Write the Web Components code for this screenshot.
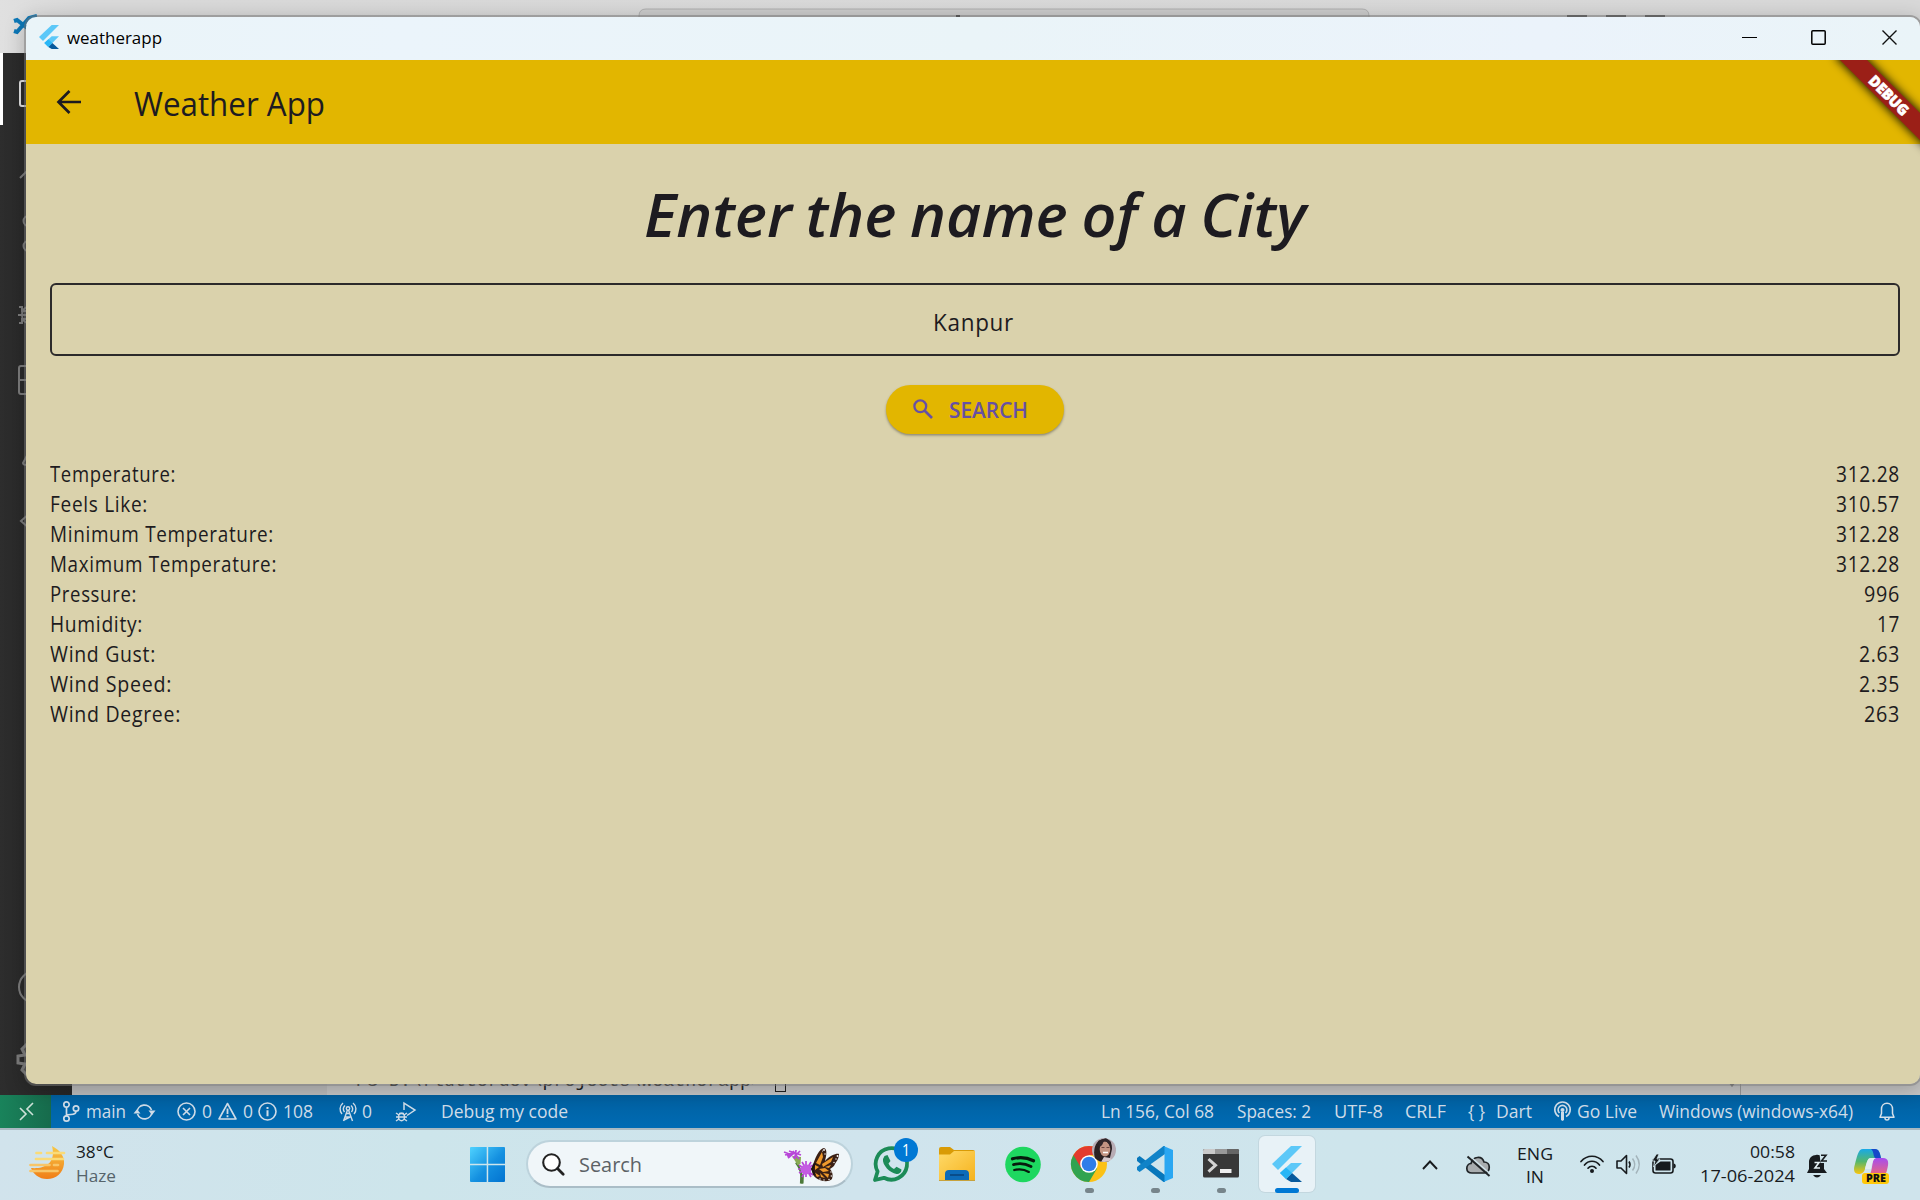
<!DOCTYPE html>
<html lang="en">
<head>
<meta charset="utf-8">
<title>weatherapp</title>
<style>
html,body{margin:0;height:100%;overflow:hidden}
body{font-family:"Open Sans","Noto Sans",sans-serif}
</style>
</head>
<body>
<desktop-screen></desktop-screen>
<script>
const ICONS = {
  flutter: `<path d="M19 0L0 18l6 6L30 0z" fill="#5cc8f8"/><path d="M19 17L8 27l6 6L30 17z" fill="#5cc8f8"/><path d="M14 33l5 3h11L20 27z" fill="#075a9d"/><path d="M8 27l6-5.500 6 5.500-6 6z" fill="#29b6f6"/>`,
  min: `<path d="M0 .5h15" stroke="#000" stroke-width="1"/>`,
  max: `<rect x=".8" y=".8" width="13.400" height="13.400" rx="1" fill="none" stroke="#000" stroke-width="1.500"/>`,
  close: `<path d="M.5.5l14 14M14.500.5l-14 14" stroke="#111" stroke-width="1.400"/>`,
  back: `<path d="M12.500 1L1.500 12l11 11M2 12h22" fill="none" stroke="#1d1b20" stroke-width="2.700"/>`,
  find: `<circle cx="7.300" cy="7.300" r="5.900" fill="none" stroke="#6750a4" stroke-width="2.300"/><path d="M11.500 11.500l7.500 7.500" stroke="#6750a4" stroke-width="2.700"/>`,
  remote: `<path d="M1 5l6 6-6 6M14 0L8 6l6 6" fill="none" stroke="#cfe3da" stroke-width="1.600"/>`,
  branch: `<g fill="none" stroke="#cfdce8" stroke-width="1.700"><circle cx="3.500" cy="3.500" r="2.700"/><circle cx="3.500" cy="17.500" r="2.700"/><circle cx="13" cy="7.500" r="2.700"/><path d="M3.500 6v9M13 10c0 3-2 3.500-5 3.500-3 0-4.500 0-4.500 2"/></g>`,
  sync: `<g fill="none" stroke="#cfdce8" stroke-width="1.700"><path d="M3 9a7.500 7.500 0 0 1 14.500-2M18 9a7.500 7.500 0 0 1-14.500 2"/></g><path d="M14.500 7.500h7L18 12zM-.500 10.500L3 6.200l3.500 4.300z" fill="#cfdce8"/>`,
  error: `<g fill="none" stroke="#cfdce8" stroke-width="1.600"><circle cx="9.500" cy="9.500" r="8.500"/><path d="M6 6l7 7M13 6l-7 7"/></g>`,
  warn: `<path d="M9.500 1.500L18 17H1z" fill="none" stroke="#cfdce8" stroke-width="1.600" stroke-linejoin="round"/><path d="M9.500 6.500v5.500M9.500 13.200v2" stroke="#cfdce8" stroke-width="1.800"/>`,
  info: `<circle cx="9.500" cy="9.500" r="8.500" fill="none" stroke="#cfdce8" stroke-width="1.600"/><path d="M9.500 5v2M9.500 8.300v6" stroke="#cfdce8" stroke-width="2"/>`,
  tower: `<g fill="none" stroke="#cfdce8" stroke-width="1.400"><path d="M4 1C.3 4 .3 9 3 12M14 1c3.700 3 3.700 8 1 11M6 3.500C4 5.500 4 8 5.500 10M12 3.500c2 2 2 4.500.5 6.500"/><circle cx="9" cy="6.500" r="1.700"/><path d="M8.500 8L4.500 19M9.500 8l4 11M6 15h6M7.500 11.500h3M5 18l6-3"/></g>`,
  debug: `<g fill="none" stroke="#cfdce8" stroke-width="1.500"><path d="M8 8V1l11 7-8 5.500"/><ellipse cx="5.500" cy="15" rx="3" ry="3.700"/><path d="M0 11l3 2M0 15h11M0 19l3-2M11 11l-3 2M11 19l-3-2M3 11.500h5"/></g>`,
  live: `<g fill="none" stroke="#cfdce8" stroke-width="1.600"><path d="M5 14.500a7.700 7.700 0 1 1 7 0M5.500 11a4.400 4.400 0 1 1 6 0"/></g><circle cx="8.500" cy="8" r="2" fill="#cfdce8"/><path d="M7 10h3v8l-1.500 1L7 18z" fill="#cfdce8"/>`,
  bell: `<path d="M8 1.200C4.500 1.200 2.500 4 2.500 7v4.500L1 15.300h14l-1.500-3.800V7c0-3-2-5.800-5.500-5.800zM6 16c0 2.700 4 2.700 4 0" fill="none" stroke="#d5e0ea" stroke-width="1.500" stroke-linejoin="round"/>`,
  haze: `<defs><linearGradient id="h" x2="0" y2="1"><stop stop-color="#f7c948"/><stop offset="1" stop-color="#f07d17"/></linearGradient></defs><path d="M23 0c8 4 13 11 12 18-1 9-8 15-17 15C10 33 4 28 2 22c10 1 26-2 21-22z" fill="url(#h)"/><g stroke-width="2.700" stroke-linecap="round"><path d="M7.500 7h4.500M18 7h17M7 13h27" stroke="#fadb78"/><path d="M1.500 19h19M25 19h4M1.500 25h27" stroke="#f8c568"/></g>`,
  start: `<defs><linearGradient id="s" x2="1" y2="1"><stop stop-color="#4fd2ff"/><stop offset=".55" stop-color="#1490e0"/><stop offset="1" stop-color="#0273d0"/></linearGradient></defs><path d="M1 0h15.700v16.700H0V1q0-1 1-1zM18.200 0H34q1 0 1 1v15.700H18.200zM0 18.200h16.700V35H1q-1 0-1-1zM18.200 18.200H35V34q0 1-1 1H18.200z" fill="url(#s)"/>`,
  search: `<circle cx="9.500" cy="9.500" r="8.300" fill="#fff" stroke="#222" stroke-width="2.100"/><path d="M15.500 15.500l5.700 5.700" stroke="#222" stroke-width="2.800" stroke-linecap="round"/>`,
  butterfly: `<path d="M18 36.500c.5-8-1-15-6-21" fill="none" stroke="#4d7a3a" stroke-width="2.200"/><path d="M16.300 27h3.600l-.4 9.500h-3.600z" fill="#4d7a3a"/><path d="M8 9l9 1-.500 7-3 1z" fill="#8aab55"/>
<g fill="none" stroke="#b847d8" stroke-width="1.700"><path d="M0 5l8 3M3 9l6-2M1 8l8-2M4 11l6-5M5 4l12 4M9 4l6 8M16 4l-7 7M12 3l-1 9"/><path d="M15 18l14 10M22 14v16M15 26l14-8M14 22h15M18 15l9 15M27 15l-9 15"/></g><ellipse cx="22" cy="22.500" rx="5.500" ry="5" fill="#c45be2"/>
<path d="M28 23C30 11 36 1 40 1c4 1 2 9 1 13 5-6 12-8 14-7 0 5-3 8-4 10-1 3-4 4-5 5 3 3 3 7 2 10-4 4-12 2-16-1-3-2-4-5-4-8z" fill="#3a2015"/>
<path d="M32 16l6-11 1 5-3 8zM38 17l11-7-2 5-8 5zM31 18l4 2-4 3zM35 22l6-1 4 3-6 1zM30 25l6 4-3 1zM36 26l5 5-4-1zM39 26l6 1-1 4zM41 20l6-2-2 3z" fill="#f09a2c"/>
<g fill="#fff"><circle cx="40" cy="3" r=".9"/><circle cx="38.500" cy="4" r=".5"/><circle cx="41" cy="7" r=".7"/><circle cx="53.500" cy="9" r=".9"/><circle cx="52" cy="12" r=".7"/><circle cx="50" cy="15.500" r=".7"/><circle cx="47" cy="25" r=".7"/><circle cx="47.300" cy="29" r=".7"/><circle cx="45" cy="32.500" r=".7"/><circle cx="40" cy="33" r=".7"/><circle cx="36" cy="32" r=".7"/></g><path d="M31 28l-3-6 3-6" stroke="#1e1510" stroke-width="2" fill="none"/>`,
  whatsapp: `<path d="M2 34l2.600-8.500A15.700 15.700 0 1 1 11 31.800z" fill="none" stroke="#1c8b57" stroke-width="3.800" stroke-linejoin="round"/><path d="M11.500 10l3-1 3 6-2 2.500c1 2.500 3 4.500 5.500 5.500l2.500-2.200 5 2.700c0 3-2.500 4.800-5 4.500C17 27 9 19 10 13z" fill="#1c8b57"/>`,
  explorer: `<defs><linearGradient id="e" x2="1" y2="1"><stop stop-color="#ffda69"/><stop offset="1" stop-color="#f5b21d"/></linearGradient></defs><path d="M0 2Q0 0 2 0h9l4 3h19q2 0 2 2v10H0z" fill="#d99b06"/><path d="M0 7.500h11l4-3.500h21v30H0z" fill="url(#e)"/><path d="M6 34v-7q0-4 4-4h16q4 0 4 4v7z" fill="#0d6bb8"/><path d="M11 28h14" stroke="#08427a" stroke-width="1.500"/><path d="M0 33.500h36" stroke="#c7a23c"/>`,
  spotify: `<circle cx="18" cy="17.500" r="17.800" fill="#1ed760"/><g fill="none" stroke="#071a0d" stroke-linecap="round"><path d="M7.500 11.800c7-2 14.500-1.300 21 2" stroke-width="3.200"/><path d="M8.500 17.600c6-1.600 12-1 17.500 2" stroke-width="2.800"/><path d="M9.300 23c5-1.200 10-.7 14.500 1.900" stroke-width="2.300"/></g>`,
  chrome: `<circle cx="18" cy="18" r="18" fill="#fbc116"/><path d="M18 18L2.400 9A18 18 0 0 0 18 36l8-13.500z" fill="#31a350"/><path d="M18 9h15.600A18 18 0 0 0 2.400 9l8 13.500L18 18z" fill="#e33b2e"/><circle cx="18" cy="18" r="8.800" fill="#fff"/><circle cx="18" cy="18" r="7.300" fill="#2f7de9"/>`,
  avatar: `<defs><clipPath id="a"><circle cx="12" cy="12" r="12"/></clipPath></defs><g clip-path="url(#a)"><path d="M0 0h24v24H0z" fill="#b8acb4"/><path d="M4 24C-1 10 5 1 12 1s8 5 8 10l-3 13z" fill="#2b2123"/><ellipse cx="13" cy="11" rx="5.300" ry="7.500" fill="#c39482"/><path d="M7 9c4-1 4-5 5-6 3 0 5 3 6 6l1-5-5-4-8 3z" fill="#30262a"/><path d="M9 24l3-5 6 1 4 4z" fill="#d5c8cb"/><path d="M11 14.500h5" stroke="#fff" stroke-width="1.500"/><path d="M9.500 9.500h3M14.500 9.500h3" stroke="#6b4640"/></g>`,
  vscode: `<path d="M0 12l2.600-2L28 29v7h-1.500L0 15z" fill="#0877bb"/><path d="M0 24l2.600 2L28 8V0h-1.500L0 21z" fill="#1083c8"/><path d="M26.500 0L36 4v28l-9.500 4c.8-.7 1-1.500 1-3V3c0-1.500-.2-2.300-1-3z" fill="#2aa7f2"/>`,
  terminal: `<rect width="36" height="28.500" rx="1.500" fill="#383838"/><path d="M1.500 0H12v5H0V1.500Q0 0 1.500 0z" fill="#cacaca"/><path d="M12 0h12v5H12z" fill="#999"/><path d="M24 0h10.500Q36 0 36 1.500V5H24z" fill="#666"/><path d="M5.500 10l7 6.300-7 6.300" fill="none" stroke="#d4d4d4" stroke-width="3"/><path d="M17 22h11.500" stroke="#eee" stroke-width="4"/>`,
  chevron: `<path d="M1 9l7-7.500L15 9" fill="none" stroke="#171b1e" stroke-width="1.900"/>`,
  cloud: `<path d="M6 18C-1 18-.5 9 5 8.500 7 1 16 .5 18 7c7 0 7 10 0 11z" fill="#a9adaf" stroke="#202427" stroke-width="1.700"/><path d="M2.500 0l22 19" stroke="#d0e4eb" stroke-width="1.500"/><path d="M1.500 1.500l22 19.500" stroke="#202427" stroke-width="1.900"/>`,
  wifi: `<g fill="none" stroke="#171b1e" stroke-width="1.700" stroke-linecap="round"><path d="M1 6.500C7-.5 17-.5 23 6.500M4.500 10c4-5 11-5 15 0M8 13.200c2-2.600 6-2.600 8 0"/></g><circle cx="12" cy="16" r="2" fill="#171b1e"/>`,
  sound: `<path d="M1 7h4l5.500-5.500v18L5 14H1z" fill="none" stroke="#171b1e" stroke-width="1.600" stroke-linejoin="round"/><path d="M13 7.500q2 3 0 6" fill="none" stroke="#171b1e" stroke-width="1.600"/><path d="M16.500 4.500q4.500 6 0 12M20 1.500q6.500 9 0 18" fill="none" stroke="#a3b3ba" stroke-width="1.500"/>`,
  battery: `<rect x="1" y="5" width="20" height="14" rx="2.500" fill="none" stroke="#171b1e" stroke-width="1.600"/><path d="M3.500 16.500V11l5-3.500H18.500v9zM21.500 9.500c3 .2 3 4.800 0 5z" fill="#171b1e"/><path d="M4.500 0L0 7h3l-1.500 6L8 5H5l2-5z" fill="#171b1e" stroke="#cfe3ea" stroke-width=".8"/>`,
  dnd: `<path d="M9 1c4-1 8 3 8 7v7l3 4H0l2-4V8c0-4 3-7 7-7zM6 21h8q-4 5-8 0z" fill="#171b1e"/><path d="M12.500-.500h8v9.500h-7z" fill="#cfe4eb"/><path d="M14 1.200h5L14.500 7H20" fill="none" stroke="#171b1e" stroke-width="1.600"/><path d="M7.500 8.500h4.500L8 14h5" fill="none" stroke="#e5f1f5" stroke-width="1.600"/>`,
  copilot: `<defs><linearGradient id="c" x2="0" y2="1"><stop stop-color="#18a9e8"/><stop offset=".5" stop-color="#54b76d"/><stop offset="1" stop-color="#fbc50b"/></linearGradient><linearGradient id="d" x2="0" y2="1"><stop stop-color="#a54df0"/><stop offset="1" stop-color="#f46a6f"/></linearGradient></defs><path d="M9 0h12c4 0 5 4 6 9H17c-3 0-4 3-6 11-1 4-4 5-6 5-5 0-6-4-4-10C3 8 4 0 9 0z" fill="url(#c)"/><path d="M17 0h4c4 0 5 4 6 9h-6c-2-2-1-7-4-9z" fill="#1748c9"/><path d="M22 9h7c6 0 6 5 4 12-1 5-4 7-8 7H12c4-1 5-4 6-10 1-5 1-9 4-9z" fill="url(#d)"/><path d="M17 9h5c-3 1-4 5-5 11h-6c2-8 3-11 6-11z" fill="#e3eef2"/>`,
};

class FitText extends HTMLElement {
  connectedCallback() {
    if (this.shadowRoot) return;
    const w = +this.getAttribute("w"), size = this.getAttribute("size") || 17.5;
    const root = this.attachShadow({mode: "open"});
    root.innerHTML = `<style>:host{display:block;flex:none;width:${w}px;font-family:"Open Sans","Noto Sans",sans-serif;font-size:${size}px;white-space:nowrap}
      span{display:inline-block;transform-origin:0 50%}</style><span><slot></slot></span>`;
    const s = root.querySelector("span");
    const n = s.getBoundingClientRect().width;
    if (n) s.style.transform = `scaleX(${w / n})`;
  }
}
customElements.define("fit-text", FitText);

class UiIcon extends HTMLElement {
  connectedCallback() {
    if (this.shadowRoot) return;
    const [w, h] = this.getAttribute("box").split(" ");
    const vb = this.getAttribute("view") || `${w} ${h}`;
    this.attachShadow({mode: "open"}).innerHTML = `<style>:host{display:block;flex:none;width:${w}px;height:${h}px}svg{display:block;overflow:visible}</style>
      <svg width="${w}" height="${h}" viewBox="0 0 ${vb}">${ICONS[this.getAttribute("name")]}</svg>`;
  }
}
customElements.define("ui-icon", UiIcon);

const define = (name, html) => customElements.define(name, class extends HTMLElement {
  connectedCallback() { if (!this.shadowRoot) this.attachShadow({mode: "open"}).innerHTML = html; }
});

define("editor-backdrop", `<style>
  :host{display:grid;grid-template:53px 1fr / 72px 1fr;background:#bababa;overflow:hidden}
  header{grid-column:1/3;display:flex;background:linear-gradient(90deg,#e0e0e0,#d9d9d9 80px,#d8d8d8)}
  header svg{display:block;width:1920px;height:53px}
  nav{background:linear-gradient(90deg,#2d2d2d,#262626)}
  nav svg{display:block}
  main{display:flex;align-items:flex-end}
  .side{width:255px;height:100%;background:#bcbcbc}
  .panel{flex:1;display:flex;align-items:flex-end;height:100%;background:#c6c6c6}
  .panel fit-text{margin-left:29px;line-height:24px;height:24px;margin-bottom:2px;color:#222}
  i{width:11px;height:20px;border:1.500px solid #222;box-sizing:border-box;margin:0 0 3px 13px}
  .arrow{width:0;border:4px solid transparent;border-top:5px solid #777;margin:0 0 4px 942px}
  .scroll{margin-left:4px;width:1px;height:100%;background:#999}
</style>
<header><svg viewBox="0 0 1920 53"><path d="M639 53V16q0-7 7-7h716q7 0 7 7v37z" fill="#cbcbcb" stroke="#b0b0b0"/><path d="M14 21l3-1 14 11M14 31l3 1 12-14 8-2" fill="none" stroke="#0c78b8" stroke-width="4"/><path d="M1567 16h20M1606 16h20M1645 16h20" stroke="#555" stroke-width="2"/><path d="M956 16h4" stroke="#333" stroke-width="2"/></svg></header>
<nav><svg width="72" height="1042" viewBox="0 53 72 1042"><path d="M0 53h3v72H0z" fill="#fff"/>
<path d="M32 81H22q-2 0-2 2v21q0 2 2 2h12" fill="none" stroke="#e0e0e0" stroke-width="2"/>
<g fill="none" stroke="#7c7c7c" stroke-width="2"><path d="M20 178l9-9"/><circle cx="29" cy="221" r="5.500"/><circle cx="29" cy="246" r="5.500"/>
<path d="M19 307h3v4h4M18 315h8M19 323h3v-4h4"/><ellipse cx="28" cy="315" rx="6" ry="8"/><rect x="19" y="366" width="28" height="28" rx="2"/><path d="M19 380h28"/><path d="M30 450l-7 13q0 2 4 2"/><path d="M30 513l-9 8 9 8"/><circle cx="35" cy="987" r="16"/>
<path d="M29 1042l-7 7 3 6-7 1v7l7 1-3 6 7 7" stroke-width="3"/></g></svg></nav>
<main><div class="side"></div><div class="panel"><fit-text w="406" size="18" style="font-family:'Liberation Mono',monospace">PS D:\\flutterdev\\projects\\weatherapp&gt;</fit-text><i></i><div class="arrow"></div><div class="scroll"></div></div></main>`);

define("editor-status", `<style>
  :host{display:flex;align-items:center;background:linear-gradient(#0060a0,#006bb4);color:#cfdce8;line-height:33px;height:33px}
  .remote{width:51px;height:33px;background:linear-gradient(90deg,#19835b,#176b4c);display:flex;align-items:center;box-sizing:border-box;padding-left:19px;margin-right:12px}
  .end{margin-left:auto;display:flex;align-items:center;padding-right:24px}
</style>
<div class="remote"><ui-icon name="remote" box="15 17"></ui-icon></div>
<ui-icon name="branch" box="16 21"></ui-icon><fit-text w="40" style="margin-left:7px">main</fit-text>
<ui-icon name="sync" box="21 18" style="margin-left:8px"></ui-icon>
<ui-icon name="error" box="19 19" style="margin-left:22px"></ui-icon><fit-text w="10" style="margin-left:6px">0</fit-text>
<ui-icon name="warn" box="19 19" style="margin-left:6px"></ui-icon><fit-text w="10" style="margin-left:6px">0</fit-text>
<ui-icon name="info" box="19 19" style="margin-left:5px"></ui-icon><fit-text w="30" style="margin-left:6px">108</fit-text>
<ui-icon name="tower" box="18 20" style="margin-left:26px"></ui-icon><fit-text w="10" style="margin-left:5px">0</fit-text>
<ui-icon name="debug" box="20 20" style="margin-left:24px"></ui-icon><fit-text w="127" style="margin-left:25px">Debug my code</fit-text>
<div class="end">
<fit-text w="113">Ln 156, Col 68</fit-text><fit-text w="74" style="margin-left:23px">Spaces: 2</fit-text><fit-text w="49" style="margin-left:23px">UTF-8</fit-text><fit-text w="41" style="margin-left:22px">CRLF</fit-text>
<fit-text w="17" style="margin-left:22px">{ }</fit-text><fit-text w="36" style="margin-left:11px">Dart</fit-text>
<ui-icon name="live" box="17 19" style="margin-left:22px"></ui-icon><fit-text w="60" style="margin-left:6px">Go Live</fit-text>
<fit-text w="194" style="margin-left:22px">Windows (windows-x64)</fit-text><ui-icon name="bell" box="16 19" style="margin:0 1px 0 26px"></ui-icon></div>`);

define("weather-row", `<style>:host{display:flex;justify-content:space-between;height:30px;line-height:30px;letter-spacing:.75px;font-variation-settings:"wght" 360}</style><slot name="label"></slot><slot name="value"></slot>`);

define("debug-banner", `<style>
  :host{position:absolute;right:-34px;top:26px;width:130px;height:19px;background:#9b1f17;transform:rotate(45deg);box-shadow:0 0 10px 1px rgba(0,0,0,.9);display:flex;justify-content:center;color:#fff;font-weight:800;line-height:19px}
</style><fit-text w="48" size="15" style="margin-right:2px;-webkit-text-stroke:.6px #fff">DEBUG</fit-text>`);

const rows = [["Temperature:",126,"312.28",64],["Feels Like:",98,"310.57",64],["Minimum Temperature:",224,"312.28",64],["Maximum Temperature:",227,"312.28",64],["Pressure:",87,"996",36],["Humidity:",93,"17",23],["Wind Gust:",106,"2.63",41],["Wind Speed:",122,"2.35",41],["Wind Degree:",131,"263",36]];

define("weather-app", `<style>
  :host{display:flex;flex-direction:column;flex:1;position:relative;overflow:hidden;background:#dad2ac;color:#1d1b20}
  header{height:84px;box-sizing:border-box;background:#e2b600;display:flex;align-items:center;padding-left:31px}
  header fit-text{margin-left:53px;line-height:84px;padding-top:2px;font-variation-settings:"wght" 370}
  section{display:flex;flex-direction:column;padding:30px 20px 0 24px}
  h1{margin:0;align-self:center;font-weight:600;font-style:italic;line-height:80px;height:80px;padding-right:1px;word-spacing:-2px}
  .field{margin-top:29px;box-sizing:border-box;height:73px;border:2px solid #2c2a2b;border-radius:6px;display:flex;justify-content:center;line-height:73px;padding:1px 4px 0 0;letter-spacing:.75px;font-variation-settings:"wght" 360}
  .btn{margin-top:29px;align-self:center;box-sizing:border-box;width:178px;height:49px;border-radius:25px;background:#e2b600;color:#6750a4;box-shadow:0 1.500px 2.500px rgba(0,0,0,.35);display:flex;align-items:center;padding-left:27px;line-height:52px;font-weight:600}
  .btn ui-icon{margin-top:-2px}
  .btn fit-text{margin-left:16px;padding-top:1px}
  .rows{margin-top:25px}
</style>
<header><ui-icon name="back" box="24 24" style="margin-top:-1px"></ui-icon><fit-text w="191" size="33.500">Weather App</fit-text></header>
<section><h1><fit-text w="662" size="59.500">Enter the name of a City</fit-text></h1>
<div class="field"><fit-text w="81" size="23.500">Kanpur</fit-text></div>
<div class="btn"><ui-icon name="find" box="20 20"></ui-icon><fit-text w="79" size="21">SEARCH</fit-text></div>
<div class="rows">${rows.map(r => `<weather-row><fit-text slot="label" w="${r[1]}" size="21">${r[0]}</fit-text><fit-text slot="value" w="${r[3]}" size="21">${r[2]}</fit-text></weather-row>`).join("")}</div></section>
<debug-banner></debug-banner>`);

define("app-window", `<style>
  :host{display:flex;flex-direction:column;box-sizing:border-box;border:2px solid rgba(110,110,110,.55);border-radius:12px;box-shadow:0 4px 20px rgba(0,0,0,.22)}
  .in{flex:1;display:flex;flex-direction:column;border-radius:10px;overflow:hidden}
  .bar{height:43px;box-sizing:border-box;padding-bottom:2px;display:flex;align-items:center;background:linear-gradient(90deg,#eaf4f8,#ebf4fb 20%,#eaf4f8 50%,#ebf3fb 80%,#eaf4f8);padding-left:13px;line-height:41px;color:#000}
  .bar ui-icon[name=flutter]{margin-top:-2px}
  .bar fit-text{margin-left:8px}
  .ctl{margin-left:auto;display:flex;align-items:center;gap:54px;padding-right:23px}
</style><div class="in"><div class="bar"><ui-icon name="flutter" box="20 24" view="30 36"></ui-icon><fit-text w="95" size="17">weatherapp</fit-text>
<div class="ctl"><ui-icon name="min" box="15 1"></ui-icon><ui-icon name="max" box="15 15"></ui-icon><ui-icon name="close" box="15 15" style="margin-left:2px"></ui-icon></div></div><slot></slot></div>`);

define("task-button", `<style>
  :host{display:flex;flex:none;width:56px;height:56px;box-sizing:border-box;margin-right:10px;align-items:center;justify-content:center;position:relative;border-radius:6px}
  :host([active]){background:#e8f2f7;box-shadow:0 0 0 1px #c3d7df}
  :host([running])::after,:host([active])::after{content:"";position:absolute;bottom:-1px;left:24px;width:9px;height:5px;border-radius:3px;background:#77858b}
  :host([active])::after{left:16px;width:24px;background:#0078d4}
  ::slotted([slot=badge]){position:absolute;left:31px;top:2px}
</style><slot></slot><slot name="badge"></slot>`);

define("count-badge", `<style>:host{display:flex;justify-content:center;width:24px;height:24px;border-radius:50%;background:#0078d4;color:#fff;line-height:24px}</style><fit-text w="8" size="16">1</fit-text>`);

define("task-bar", `<style>
  :host{display:flex;box-sizing:border-box;height:72px;padding-bottom:2px;border-top:2px solid #a9b9c2;background:linear-gradient(100deg,#d1e3ec,#cde5eb 22%,#d0e4ed 45%,#cee5ec 70%,#cfe4ec);align-items:center;color:#171b1e}
  .w{display:flex;align-items:center;padding-left:29px;width:441px;box-sizing:border-box;flex:none}
  .two{display:flex;flex-direction:column;line-height:24px}
  .pill{margin:0 10px 0 21px;width:327px;height:48px;box-sizing:border-box;border-radius:24px;background:#f0f6f9;border:2px solid #bdd3dc;border-bottom:2px solid #aabdc7;display:flex;align-items:center;padding:0 12px 0 14px;line-height:44px;flex:none}
  .tray{margin-left:auto;display:flex;align-items:center;padding-right:31px}
  .cp{position:relative}
  .pre{position:absolute;left:8px;top:24px;width:27px;height:11px;background:#ffc80a;border-radius:3px;line-height:11px;font-weight:800;display:flex;justify-content:center;color:#111}
</style>
<div class="w"><ui-icon name="haze" box="36 34" style="margin-top:-2px"></ui-icon><div class="two" style="margin-left:11px"><fit-text w="38" size="17">38°C</fit-text><fit-text w="40" size="17" style="color:#56646b">Haze</fit-text></div></div>
<ui-icon name="start" box="35 35" style="margin-left:29px"></ui-icon>
<div class="pill"><ui-icon name="search" box="22 22"></ui-icon><fit-text w="63" size="20.500" style="margin-left:15px;color:#5c6266">Search</fit-text><ui-icon name="butterfly" box="55 36" style="margin-left:auto;margin-top:2px"></ui-icon></div>
<task-button><ui-icon name="whatsapp" box="36 36"></ui-icon><count-badge slot="badge"></count-badge></task-button>
<task-button><ui-icon name="explorer" box="36 34"></ui-icon></task-button>
<task-button><ui-icon name="spotify" box="36 35"></ui-icon></task-button>
<task-button running><ui-icon name="chrome" box="36 36"></ui-icon><ui-icon name="avatar" box="24 24" slot="badge"></ui-icon></task-button>
<task-button running><ui-icon name="vscode" box="36 36"></ui-icon></task-button>
<task-button running><ui-icon name="terminal" box="36 28" style="margin-top:-2px"></ui-icon></task-button>
<task-button active><ui-icon name="flutter" box="30 36"></ui-icon></task-button>
<div class="tray"><ui-icon name="chevron" box="16 10" style="margin-top:2px"></ui-icon>
<ui-icon name="cloud" box="24 21" style="margin-left:28px;margin-top:3px"></ui-icon>
<div class="two" style="margin-left:27px;align-items:center;line-height:23px;margin-top:1px"><fit-text w="36" size="17">ENG</fit-text><fit-text w="18" size="17">IN</fit-text></div>
<ui-icon name="wifi" box="24 18" style="margin-left:27px"></ui-icon>
<ui-icon name="sound" box="24 21" style="margin-left:12px"></ui-icon>
<ui-icon name="battery" box="24 20" style="margin-left:12px;margin-top:-1px"></ui-icon>
<div class="two" style="margin-left:24px;align-items:flex-end"><fit-text w="45" size="17">00:58</fit-text><fit-text w="95" size="17">17-06-2024</fit-text></div>
<ui-icon name="dnd" box="21 24" style="margin-left:12px;margin-top:3px"></ui-icon>
<div class="cp" style="margin-left:26px;margin-top:-3px"><ui-icon name="copilot" box="35 28"></ui-icon><div class="pre"><fit-text w="20" size="10.500">PRE</fit-text></div></div></div>`);

define("desktop-screen", `<style>
  :host{display:flex;flex-direction:column;width:1920px;height:1200px;position:relative;overflow:hidden}
  editor-backdrop{height:1095px;flex:none}
  app-window{position:absolute;left:24px;top:15px;width:1898px;height:1071px}
</style><editor-backdrop></editor-backdrop><editor-status></editor-status><task-bar></task-bar>
<app-window><weather-app></weather-app></app-window>`);
</script>
</body>
</html>
